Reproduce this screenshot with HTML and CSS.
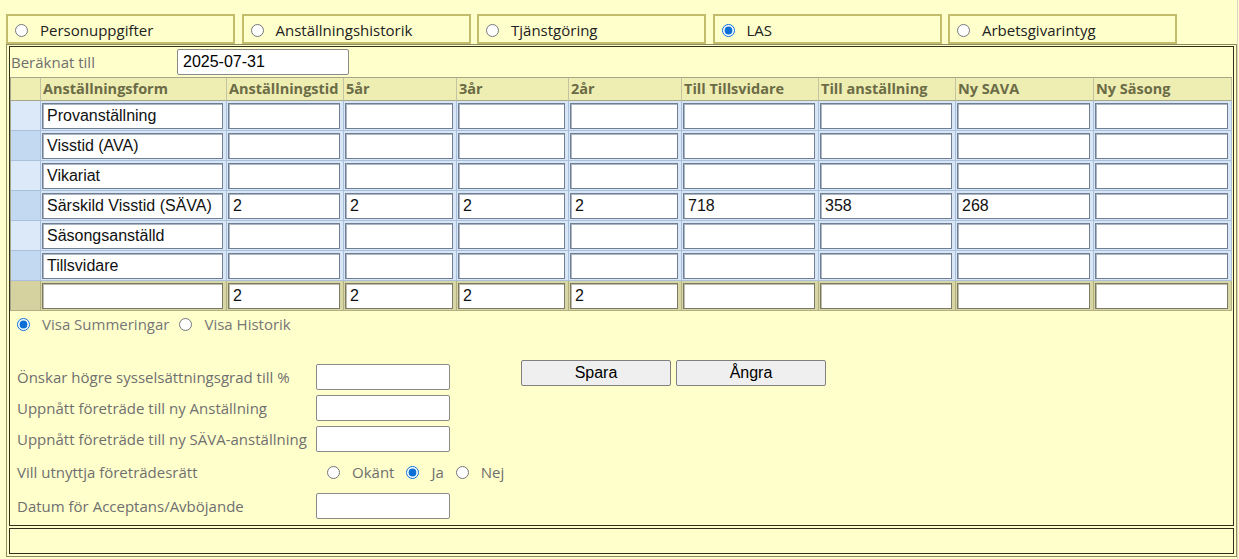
FILE: index.html
```html
<!DOCTYPE html>
<html lang="sv">
<head>
<meta charset="utf-8">
<title>LAS</title>
<link rel="stylesheet" href="styles.css">
</head>
<body>
<div class="page">
  <div class="tabs">
    <label class="tab"><input type="radio" name="tab"><span>Personuppgifter</span></label>
    <label class="tab"><input type="radio" name="tab"><span>Anställningshistorik</span></label>
    <label class="tab"><input type="radio" name="tab"><span>Tjänstgöring</span></label>
    <label class="tab"><input type="radio" name="tab" checked><span>LAS</span></label>
    <label class="tab"><input type="radio" name="tab"><span>Arbetsgivarintyg</span></label>
  </div>

  <div class="panel">
    <div class="cell main">
      <div class="calc-row">
        <span class="calc-label">Beräknat till</span>
        <input class="calc-input" type="text" value="2025-07-31">
      </div>

      <div class="grid">
        <div class="h"></div>
        <div class="h">Anställningsform</div>
        <div class="h">Anställningstid</div>
        <div class="h">5år</div>
        <div class="h">3år</div>
        <div class="h">2år</div>
        <div class="h">Till Tillsvidare</div>
        <div class="h">Till anställning</div>
        <div class="h">Ny SAVA</div>
        <div class="h">Ny Säsong</div>

        <div class="sel"></div>
        <div class="d"><input type="text" value="Provanställning"></div>
        <div class="d"><input type="text" value=""></div>
        <div class="d"><input type="text" value=""></div>
        <div class="d"><input type="text" value=""></div>
        <div class="d"><input type="text" value=""></div>
        <div class="d"><input type="text" value=""></div>
        <div class="d"><input type="text" value=""></div>
        <div class="d"><input type="text" value=""></div>
        <div class="d"><input type="text" value=""></div>

        <div class="sel alt"></div>
        <div class="d"><input type="text" value="Visstid (AVA)"></div>
        <div class="d"><input type="text" value=""></div>
        <div class="d"><input type="text" value=""></div>
        <div class="d"><input type="text" value=""></div>
        <div class="d"><input type="text" value=""></div>
        <div class="d"><input type="text" value=""></div>
        <div class="d"><input type="text" value=""></div>
        <div class="d"><input type="text" value=""></div>
        <div class="d"><input type="text" value=""></div>

        <div class="sel"></div>
        <div class="d"><input type="text" value="Vikariat"></div>
        <div class="d"><input type="text" value=""></div>
        <div class="d"><input type="text" value=""></div>
        <div class="d"><input type="text" value=""></div>
        <div class="d"><input type="text" value=""></div>
        <div class="d"><input type="text" value=""></div>
        <div class="d"><input type="text" value=""></div>
        <div class="d"><input type="text" value=""></div>
        <div class="d"><input type="text" value=""></div>

        <div class="sel alt"></div>
        <div class="d"><input type="text" value="Särskild Visstid (SÄVA)"></div>
        <div class="d"><input type="text" value="2"></div>
        <div class="d"><input type="text" value="2"></div>
        <div class="d"><input type="text" value="2"></div>
        <div class="d"><input type="text" value="2"></div>
        <div class="d"><input type="text" value="718"></div>
        <div class="d"><input type="text" value="358"></div>
        <div class="d"><input type="text" value="268"></div>
        <div class="d"><input type="text" value=""></div>

        <div class="sel"></div>
        <div class="d"><input type="text" value="Säsongsanställd"></div>
        <div class="d"><input type="text" value=""></div>
        <div class="d"><input type="text" value=""></div>
        <div class="d"><input type="text" value=""></div>
        <div class="d"><input type="text" value=""></div>
        <div class="d"><input type="text" value=""></div>
        <div class="d"><input type="text" value=""></div>
        <div class="d"><input type="text" value=""></div>
        <div class="d"><input type="text" value=""></div>

        <div class="sel alt"></div>
        <div class="d"><input type="text" value="Tillsvidare"></div>
        <div class="d"><input type="text" value=""></div>
        <div class="d"><input type="text" value=""></div>
        <div class="d"><input type="text" value=""></div>
        <div class="d"><input type="text" value=""></div>
        <div class="d"><input type="text" value=""></div>
        <div class="d"><input type="text" value=""></div>
        <div class="d"><input type="text" value=""></div>
        <div class="d"><input type="text" value=""></div>

        <div class="sel foot"></div>
        <div class="d foot"><input type="text" value=""></div>
        <div class="d foot"><input type="text" value="2"></div>
        <div class="d foot"><input type="text" value="2"></div>
        <div class="d foot"><input type="text" value="2"></div>
        <div class="d foot"><input type="text" value="2"></div>
        <div class="d foot"><input type="text" value=""></div>
        <div class="d foot"><input type="text" value=""></div>
        <div class="d foot"><input type="text" value=""></div>
        <div class="d foot"><input type="text" value=""></div>
      </div>

      <div class="view-row">
        <label class="opt"><input type="radio" name="view" checked><span>Visa Summeringar</span></label>
        <label class="opt"><input type="radio" name="view"><span>Visa Historik</span></label>
      </div>

      <div class="form-area">
        <div class="form-grid">
          <div class="flabel">Önskar högre sysselsättningsgrad till %</div>
          <div class="fval"><input class="finput" type="text"></div>
          <div class="flabel">Uppnått företräde till ny Anställning</div>
          <div class="fval"><input class="finput" type="text"></div>
          <div class="flabel">Uppnått företräde till ny SÄVA-anställning</div>
          <div class="fval"><input class="finput" type="text"></div>
          <div class="flabel">Vill utnyttja företrädesrätt</div>
          <div class="fval radios">
            <label class="ropt"><input type="radio" name="pref"><span>Okänt</span></label>
            <label class="ropt"><input type="radio" name="pref" checked><span>Ja</span></label>
            <label class="ropt"><input type="radio" name="pref"><span>Nej</span></label>
          </div>
          <div class="flabel">Datum för Acceptans/Avböjande</div>
          <div class="fval"><input class="finput" type="text"></div>
        </div>
        <div class="buttons">
          <button class="btn" type="button">Spara</button>
          <button class="btn" type="button">Ångra</button>
        </div>
      </div>
    </div>
    <div class="cell status"></div>
  </div>
</div>
</body>
</html>
```

FILE: styles.css
```css
* { box-sizing: border-box; }

html, body {
  margin: 0;
  padding: 0;
  background: #ffffcc;
}

body {
  font-family: "Open Sans", "Noto Sans", "DejaVu Sans", sans-serif;
  font-size: 15px;
  color: #222;
}

.page {
  width: 1238px;
  height: 559px;
  padding: 14px 0 0 6px;
  border-right: 1px solid #d8d8c4;
}

/* Tabs */
.tabs {
  display: flex;
  gap: 6.5px;
  height: 30px;
}

.tab {
  width: 229px;
  height: 30px;
  border: 2px solid #c2bc6c;
  display: flex;
  align-items: center;
  padding-top: 2px;
  color: #222;
  font-size: 15px;
}

.tab input {
  margin: 0 12px 0 7px;
  width: 13px;
  height: 13px;
  accent-color: #0b6fd6;
}

/* Panel */
.panel {
  width: 1231px;
  border: 1px solid #8d8d5e;
  padding: 1px 2px 2px 2px;
  display: flex;
  flex-direction: column;
  gap: 2px;
}

.cell {
  border: 1px solid #2f2f1a;
}

.main {
  height: 480px;
}

.status {
  height: 26px;
}

/* Beräknat row */
.calc-row {
  height: 30px;
  display: flex;
  align-items: flex-start;
  padding-top: 2px;
}

.calc-label {
  width: 167px;
  padding-left: 1px;
  line-height: 26px;
  color: #6f6f6f;
  font-size: 15px;
}

.calc-input {
  width: 172px;
  height: 26px;
  border: 1px solid #8a8a8a;
  border-radius: 2px;
  background: #fff;
  font-family: "Liberation Sans", Arial, sans-serif;
  font-size: 16px;
  color: #000;
  padding: 0 0 0 5px;
}

/* Grid */
.grid {
  display: grid;
  grid-template-columns: 30px 186px 117px 113px 112px 113px 137px 137px 138px 138px;
  grid-template-rows: 23px repeat(7, 30px);
  width: 1222px;
  border-top: 1px solid #a6a68a;
  border-left: 1px solid #a6a68a;
}

.h {
  background: #eeeeb3;
  border-right: 1px solid #c4c4a4;
  border-bottom: 1px solid #a6a68a;
  font-weight: 700;
  font-size: 14.5px;
  color: #6b6b46;
  line-height: 22px;
  padding-left: 2px;
  white-space: nowrap;
  overflow: visible;
}

.sel {
  background: #dbe9f8;
  border-right: 1px solid #a9c0dc;
  border-bottom: 1px solid #a9c0dc;
}

.sel.alt {
  background: #c3d8f1;
}

.sel.foot {
  background: #d6d2a0;
  border-right-color: #b3af80;
  border-bottom-color: #b3af80;
}

.d {
  background: #d8e6f6;
  border-right: 1px solid #a9c0dc;
  border-bottom: 1px solid #a9c0dc;
  padding: 2px 3px 1px 1px;
}

.d.foot {
  background: #d9d6a6;
  border-right-color: #b3af80;
  border-bottom-color: #b3af80;
}

.d input {
  display: block;
  width: 100%;
  height: 26px;
  border: 1px solid #6f7e92;
  box-shadow: inset 1px 1px 0 #aab6c4;
  background: #fff;
  font-family: "Liberation Sans", Arial, sans-serif;
  font-size: 16px;
  color: #111;
  padding: 0 0 0 4px;
}

.d.foot input {
  border-color: #7b7a66;
  box-shadow: inset 1px 1px 0 #bdbca8;
}

/* View options */
.view-row {
  height: 26px;
  display: flex;
  align-items: center;
  color: #767676;
  font-size: 15px;
}

.opt {
  display: inline-flex;
  align-items: center;
}

.opt input {
  margin: 0 12px 0 7px;
  width: 13px;
  height: 13px;
  accent-color: #0b6fd6;
}

.opt + .opt input {
  margin-left: 10px;
}

/* Form */
.form-area {
  margin-top: 24px;
  display: flex;
  align-items: flex-start;
}

.form-grid {
  display: grid;
  grid-template-columns: 299px 134px;
  grid-template-rows: 31px 31px 31px 36px 31px;
  margin-left: 7px;
}

.flabel {
  display: flex;
  align-items: center;
  color: #6f6f6f;
  font-size: 15px;
  white-space: nowrap;
}

.fval {
  display: flex;
  align-items: center;
}

.finput {
  width: 134px;
  height: 26px;
  border: 1px solid #8a8a8a;
  border-radius: 2px;
  background: #fff;
  font-family: "Liberation Sans", Arial, sans-serif;
  font-size: 16px;
  padding: 0 0 0 4px;
}

.radios {
  white-space: nowrap;
  color: #6f6f6f;
  font-size: 15px;
  overflow: visible;
}

.ropt {
  display: inline-flex;
  align-items: center;
}

.ropt input {
  margin: 0 12px 0 12px;
  width: 13px;
  height: 13px;
  accent-color: #0b6fd6;
}

.ropt:first-child input {
  margin-left: 11px;
}

.buttons {
  display: flex;
  gap: 5px;
  margin-left: 71px;
  margin-top: -1px;
}

.btn {
  width: 150px;
  height: 26px;
  background: #efefef;
  border: 1px solid #808080;
  border-radius: 2px;
  font-family: "Liberation Sans", Arial, sans-serif;
  font-size: 16px;
  color: #000;
  padding: 0;
}
```
